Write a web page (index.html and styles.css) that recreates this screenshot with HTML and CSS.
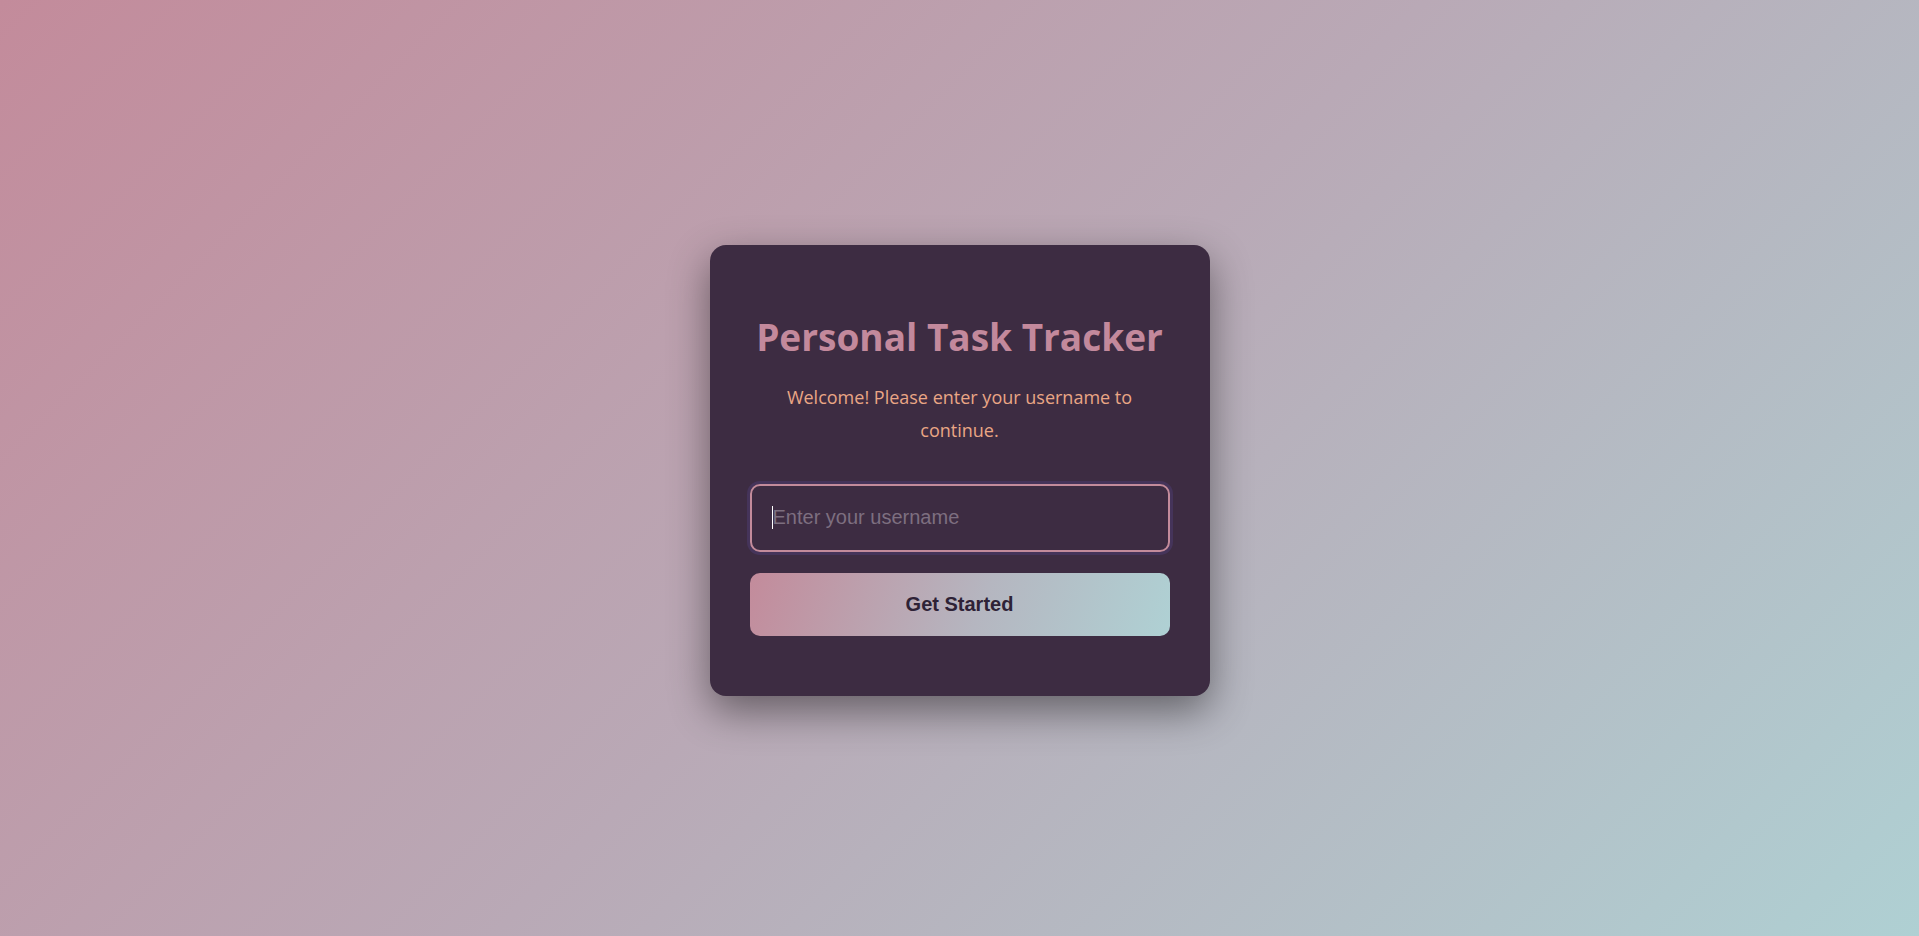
FILE: index.html
```html
<!DOCTYPE html>
<html lang="en">
<head>
<meta charset="utf-8">
<title>Personal Task Tracker</title>
<link rel="stylesheet" href="styles.css">
</head>
<body>
  <main class="card">
    <h1 class="title">Personal Task Tracker</h1>
    <p class="subtitle">Welcome! Please enter your username to continue.</p>
    <form class="login-form">
      <div class="field">
        <input class="username" type="text" placeholder="Enter your username">
        <span class="caret"></span>
      </div>
      <button class="start-btn" type="button">Get Started</button>
    </form>
  </main>
</body>
</html>
```
FILE: styles.css
```css
* { box-sizing: border-box; }
html, body { height: 100%; }
body {
  margin: 0;
  padding-top: 5px;
  min-height: 100vh;
  display: flex;
  align-items: center;
  justify-content: center;
  background: linear-gradient(135deg, #c38b9b 0%, #b9a9b6 50%, #afd0d3 100%);
  font-family: "Open Sans", "Noto Sans", sans-serif;
}
.card {
  width: 500px;
  background: #3d2c42;
  border-radius: 16px;
  padding: 68px 40px 60px;
  text-align: center;
  box-shadow: 0 15px 40px rgba(0, 0, 0, 0.45);
}
.title {
  margin: 0 0 20px;
  font-size: 37px;
  line-height: 1.3;
  font-weight: 700;
  color: #c3899c;
}
.subtitle {
  margin: 0 0 38px;
  font-size: 18px;
  line-height: 1.8;
  color: #eaa685;
}
.login-form {
  display: flex;
  flex-direction: column;
  gap: 21px;
}
.field {
  position: relative;
}
.username {
  display: block;
  width: 100%;
  padding: 20.5px 21px;
  font-family: "Liberation Sans", Arial, sans-serif;
  font-size: 20px;
  color: #e8dbe6;
  background: transparent;
  border: 2px solid #c38b9b;
  border-radius: 10px;
  outline: none;
  box-shadow: 0 0 0 3px #45345a;
}
.username::placeholder { color: #7d6f80; }
.caret {
  position: absolute;
  left: 22px;
  top: 22px;
  width: 1px;
  height: 23px;
  background: #ffffff;
}
.start-btn {
  width: 100%;
  padding: 20px;
  font-family: "Liberation Sans", Arial, sans-serif;
  font-size: 20px;
  font-weight: 700;
  color: #2e2236;
  border: none;
  border-radius: 10px;
  background: linear-gradient(110deg, #c38b9b 0%, #b5b6c0 55%, #afd1d4 100%);
  cursor: pointer;
}
```
